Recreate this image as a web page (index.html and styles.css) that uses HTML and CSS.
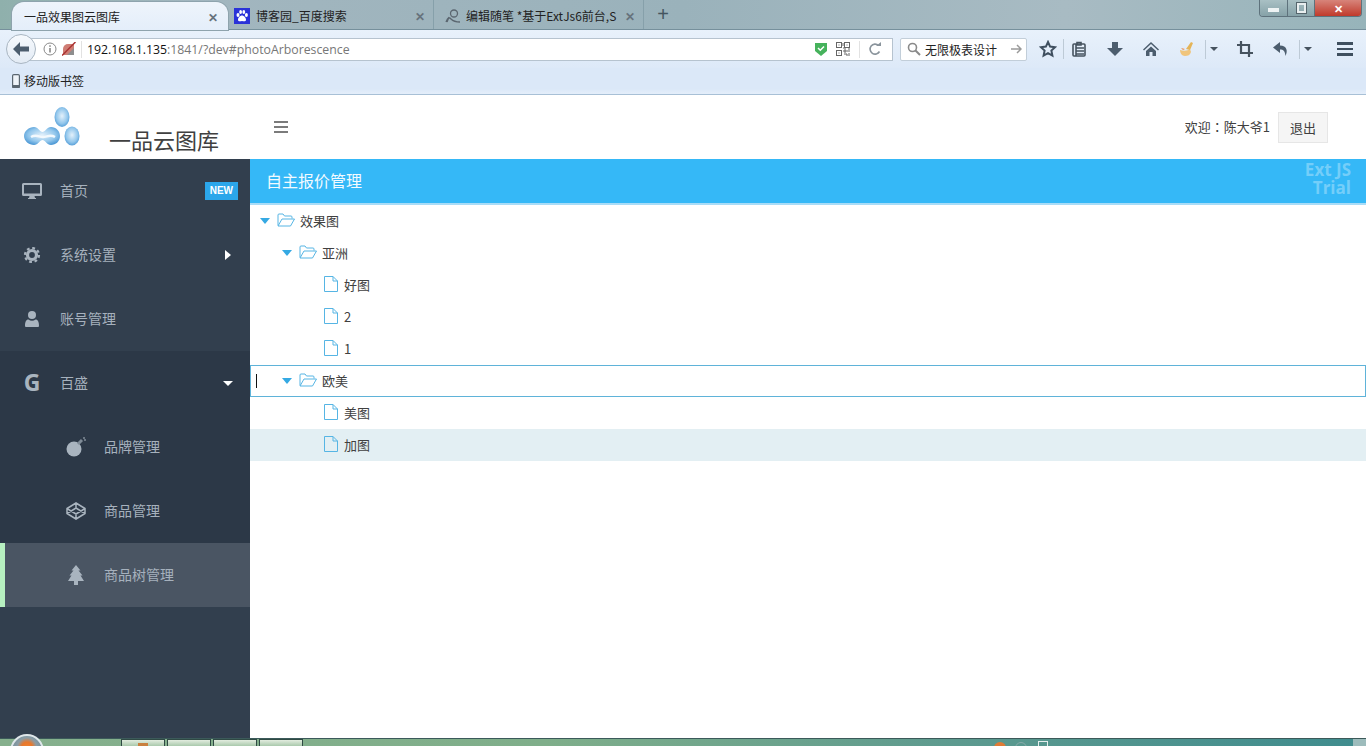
FILE: index.html
```html
<!DOCTYPE html>
<html lang="en">
<head>
    <meta charset="UTF-8">
    <meta name="viewport" content="width=device-width, initial-scale=1.0">
    <title>一品效果图云图库</title>
    <link rel="stylesheet" href="styles.css">
</head>
<body>
    <!-- browser chrome -->
    <div class="tabstrip">
        <div class="tab tab-active">
            <span class="tab-title">一品效果图云图库</span>
            <span class="tab-close">✕</span>
        </div>
        <div class="tab tab-baidu">
            <svg class="favicon" viewBox="0 0 16 16"><rect width="16" height="16" fill="#2a32d8"/><g fill="#fff"><ellipse cx="4" cy="7" rx="1.5" ry="2"/><ellipse cx="6.6" cy="4" rx="1.4" ry="2"/><ellipse cx="9.8" cy="4" rx="1.4" ry="2"/><ellipse cx="12.4" cy="7" rx="1.5" ry="2"/><path d="M8 7.5c-2 0-4 2.4-4 4.2 0 1.6 1.6 1.8 4 1.3 2.4.5 4 .3 4-1.3 0-1.800-2-4.200-4-4.200z"/></g></svg>
            <span class="tab-title">博客园_百度搜索</span>
            <span class="tab-close">✕</span>
        </div>
        <div class="tab tab-cnblogs">
            <svg class="favicon" viewBox="0 0 16 16" fill="none" stroke="#5b6670" stroke-width="1.300"><circle cx="9" cy="5.500" r="3.500"/><path d="M1 14c2-5 3-5 5-3s6 3 9 3M4 9l-2 5"/></svg>
            <span class="tab-title tab-fade">编辑随笔 *基于ExtJs6前台,S</span>
            <span class="tab-close">✕</span>
        </div>
        <div class="tab-new">+</div>
        <div class="winbtns">
            <div class="winbtn win-min"><i></i></div>
            <div class="winbtn win-max"><i></i></div>
            <div class="winbtn win-close">✕</div>
        </div>
    </div>

    <div class="navbar">
        <div class="backbtn">
            <svg width="18" height="16" viewBox="0 0 18 16"><path d="M8 1 1 8l7 7V10.500h9v-5H8z" fill="#4c5d6e"/></svg>
        </div>
        <div class="urlbar">
            <svg class="url-icon" width="14" height="14" viewBox="0 0 14 14"><circle cx="7" cy="7" r="6" fill="none" stroke="#8a8a8a"/><rect x="6.300" y="6" width="1.400" height="4.500" fill="#777"/><rect x="6.300" y="3.300" width="1.400" height="1.500" fill="#777"/></svg>
            <svg class="url-icon" width="14" height="14" viewBox="0 0 14 14"><path d="M1 13V7a5 5 0 0 1 5-5h6v11z" fill="#cf7d74"/><path d="M0 13.500 13.500 0" stroke="#a33" stroke-width="1.500"/><path d="M5 13l7-7v7z" fill="#8e8e8e"/></svg>
            <span class="url-sep"></span>
            <span class="url-text"><b>192.168.1.135</b>:1841/?dev#photoArborescence</span>
            <svg class="url-icon" width="14" height="16" viewBox="0 0 14 16"><path d="M1 2h12v8l-6 5-6-5z" fill="#46b25c"/><path d="M4 7l2.300 2.300L10 5.500" stroke="#fff" stroke-width="1.500" fill="none"/></svg>
            <svg class="url-icon qr" width="14" height="14" viewBox="0 0 14 14" fill="none" stroke="#666"><rect x=".5" y=".5" width="5" height="5"/><rect x="8.500" y=".5" width="5" height="5"/><rect x=".5" y="8.500" width="5" height="5"/><path d="M2.500 3h1M10.500 3h1M2.500 11h1M7 1v3M7 6h3M12 7h2M8 8h2v2H8zM11 9h3M8 12h3v2M13 11v3" /></svg>
            <span class="url-sep sep-right"></span>
            <svg class="url-icon reload" width="14" height="14" viewBox="0 0 14 14" fill="none"><path d="M11.500 9.500A5 5 0 1 1 10.500 3.500" stroke="#8a949c" stroke-width="1.600"/><path d="M8 4h5V0z" fill="#8a949c"/></svg>
        </div>
        <div class="searchbar">
            <svg width="14" height="14" viewBox="0 0 14 14" fill="none" stroke="#8a8a8a" stroke-width="1.600"><circle cx="5.500" cy="5.500" r="4"/><path d="M8.500 8.500 13 13" stroke-width="2"/></svg>
            <span class="search-text">无限极表设计</span>
            <svg width="11" height="10" viewBox="0 0 11 10" fill="none" stroke="#9a9a9a" stroke-width="1.500"><path d="M0 5h9M6 1l4 4-4 4"/></svg>
        </div>
        <div class="tools">
            <div class="tool"><svg width="18" height="18" viewBox="0 0 18 18"><path d="M9 2l2.100 4.600 5 .6-3.700 3.400 1 5L9 13.100 4.600 15.600l1-5L1.900 7.200l5-.6z" fill="none" stroke="#3f4f5f" stroke-width="2"/></svg></div>
            <div class="tool tool-line"><svg width="16" height="16" viewBox="0 0 16 16" fill="none" stroke="#46535f" stroke-width="1.600"><rect x="2" y="3" width="12" height="12" rx="1"/><path d="M6 1.500h4V4H6zM5 7h8M5 10h8M5 13h8M5 3v12"/></svg></div>
            <div class="tool"><svg width="18" height="16" viewBox="0 0 18 16"><path d="M6 1h6v6h5l-8 8-8-8h5z" fill="#4c5d6e"/></svg></div>
            <div class="tool"><svg width="16" height="16" viewBox="0 0 16 16"><path d="M8 1 0 8.500l1 1L8 3l7 6.500 1-1zM3 10l5-4.500L13 10v5H9.500v-4h-3v4H3z" fill="#4c5d6e"/></svg></div>
            <div class="tool"><svg width="16" height="16" viewBox="0 0 16 16"><path d="M1 9c3 1 8 1 10-1l1 3c-1 3-3 4-6 4-3 0-5-3-5-6z" fill="#f0c57c"/><path d="M7 8l5-7 2 1-3 7z" fill="#e4b458"/><path d="M2 7l4 1-2 1z" fill="#ea8a4a"/></svg></div>
            <div class="tool-caret caret-first"><i></i></div>
            <div class="tool tool-crop"><svg width="16" height="16" viewBox="0 0 16 16" fill="none" stroke="#46535f" stroke-width="2.200"><path d="M4 0v12h12M0 4h12v12"/></svg></div>
            <div class="tool"><svg width="16" height="14" viewBox="0 0 16 14"><path d="M7 0 0 5.500 7 11V7.500c3 0 5 1 5.500 6.500C15 9 14 3.500 7 3.500z" fill="#4c5d6e"/></svg></div>
            <div class="tool-caret"><i></i></div>
            <div class="tool tool-menu"><i></i><i></i><i></i></div>
        </div>
    </div>

    <div class="bookmarks">
        <svg width="8" height="14" viewBox="0 0 8 14"><rect x=".6" y=".6" width="6.800" height="12.800" rx="1.200" fill="#eef3f8" stroke="#5a6670" stroke-width="1.200"/><rect x="0" y="11" width="8" height="3" rx="1" fill="#5a6670"/></svg>
        <span>移动版书签</span>
    </div>

    <!-- app -->
    <div class="app-header">
        <div class="logo">
            <svg width="62" height="42" viewBox="0 0 62 42">
                <defs>
                    <radialGradient id="blob" cx="50%" cy="45%" r="58%">
                        <stop offset="0" stop-color="#e4f1fb"/>
                        <stop offset=".65" stop-color="#93c7ec"/>
                        <stop offset="1" stop-color="#4f9ad6"/>
                    </radialGradient>
                </defs>
                <ellipse cx="40" cy="11" rx="7.500" ry="10" fill="url(#blob)"/>
                <ellipse cx="50" cy="30" rx="7.500" ry="9.500" fill="url(#blob)"/>
                <path d="M12 21C16 21 18 26 20.500 26 23 26 25 21 29 21 34 21 38 25 38 30S34 39 29 39C25 39 23 34 20.500 34S16 39 12 39C7 39 2 35 2 30S7 21 12 21z" fill="url(#blob)"/>
                <path d="M9 31c5-3 8 0 12 0s7-3 12 0" stroke="#f3f9fd" stroke-width="2.500" fill="none"/>
            </svg>
        </div>
        <div class="brand">一品云图库</div>
        <div class="hamburger"><i></i><i></i><i></i></div>
        <div class="welcome">欢迎<span class="colon">：</span>陈大爷1</div>
        <button class="logout">退出</button>
    </div>

    <div class="app-body">
        <div class="sidebar">
            <div class="menu-item">
                <svg class="menu-icon" width="20" height="16" viewBox="0 0 20 16"><path d="M0 1.500A1.500 1.500 0 0 1 1.500 0h17A1.500 1.500 0 0 1 20 1.500v10a1.500 1.500 0 0 1-1.500 1.500h-6l.5 2h1v1H6v-1h1l.5-2h-6A1.500 1.500 0 0 1 0 11.500zM2 2v8.500h16V2z" fill="#a9b4bf"/></svg>
                <span>首页</span>
                <em class="badge">NEW</em>
            </div>
            <div class="menu-item">
                <svg class="menu-icon" width="20" height="16" viewBox="0 0 16 16"><circle cx="8" cy="8" r="4.500" fill="none" stroke="#a9b4bf" stroke-width="3.200"/><circle cx="8" cy="8" r="7" fill="none" stroke="#a9b4bf" stroke-width="2.200" stroke-dasharray="2.800 2.700"/></svg>
                <span>系统设置</span>
                <i class="caret-right"></i>
            </div>
            <div class="menu-item">
                <svg class="menu-icon" width="20" height="16" viewBox="0 0 14 16"><circle cx="7" cy="4" r="4" fill="#a9b4bf"/><path d="M1 16a1 1 0 0 1-1-1c0-4 1-6.500 3.500-6.500 1 .8 2.200 1.200 3.500 1.200s2.500-.4 3.500-1.200C13 8.500 14 11 14 15a1 1 0 0 1-1 1z" fill="#a9b4bf"/></svg>
                <span>账号管理</span>
            </div>
            <div class="menu-group">
                <div class="menu-item">
                    <span class="menu-icon g-icon">G</span>
                    <span>百盛</span>
                    <i class="caret-down"></i>
                </div>
                <div class="menu-item sub-item">
                    <svg class="menu-icon" width="20" height="20" viewBox="0 0 20 20"><circle cx="8" cy="12" r="7.500" fill="#a9b4bf"/><path d="M12 7l4-4" stroke="#7f8b97" stroke-width="3"/><path d="M18 0v2M20 3h-2" stroke="#a9b4bf"/></svg>
                    <span>品牌管理</span>
                </div>
                <div class="menu-item sub-item">
                    <svg class="menu-icon" width="20" height="18" viewBox="0 0 20 18" fill="none" stroke="#a9b4bf" stroke-width="1.500"><path d="M10 1l9 5.500v5L10 17l-9-5.500v-5zM10 1v5M1 11.500 10 6l9 5.500M1 6.500 10 12l9-5.500M10 12v5"/></svg>
                    <span>商品管理</span>
                </div>
            </div>
            <div class="menu-item sub-item menu-active">
                <svg class="menu-icon" width="20" height="20" viewBox="0 0 16 20"><path d="M8 0l4.500 5.500h-2l4 5h-2l3.500 5.500H0l3.500-5.500h-2l4-5h-2zM6 16h4v4H6z" fill="#a9b4bf"/></svg>
                <span>商品树管理</span>
            </div>
        </div>

        <div class="panel">
            <div class="panel-head">
                <span>自主报价管理</span>
                <div class="trial">Ext JS<br>Trial</div>
            </div>
            <div class="tree">
                <div class="node lvl0">
                    <i class="node-arrow"></i>
                    <svg class="folder" width="18" height="14" viewBox="0 0 18 14" fill="none" stroke="#56b5e4"><path d="M1 12.500V2a1 1 0 0 1 1-1h4l1.500 2H14a1 1 0 0 1 1 1v1.500"/><path d="M1 13h12.500L17.500 6H5z"/></svg>
                    <span>效果图</span>
                </div>
                <div class="node lvl1">
                    <i class="node-arrow"></i>
                    <svg class="folder" width="18" height="14" viewBox="0 0 18 14" fill="none" stroke="#56b5e4"><path d="M1 12.500V2a1 1 0 0 1 1-1h4l1.500 2H14a1 1 0 0 1 1 1v1.500"/><path d="M1 13h12.500L17.500 6H5z"/></svg>
                    <span>亚洲</span>
                </div>
                <div class="node leaf">
                    <svg class="file" width="14" height="16" viewBox="0 0 14 16" fill="none" stroke="#56b5e4"><path d="M.5.5h8.500l4.500 4.500v10.500H.5zM9 .5V5h4.500"/></svg>
                    <span>好图</span>
                </div>
                <div class="node leaf">
                    <svg class="file" width="14" height="16" viewBox="0 0 14 16" fill="none" stroke="#56b5e4"><path d="M.5.5h8.500l4.500 4.500v10.500H.5zM9 .5V5h4.500"/></svg>
                    <span>2</span>
                </div>
                <div class="node leaf">
                    <svg class="file" width="14" height="16" viewBox="0 0 14 16" fill="none" stroke="#56b5e4"><path d="M.5.5h8.500l4.500 4.500v10.500H.5zM9 .5V5h4.500"/></svg>
                    <span>1</span>
                </div>
                <div class="node lvl1 node-focus">
                    <i class="cursor"></i>
                    <i class="node-arrow"></i>
                    <svg class="folder" width="18" height="14" viewBox="0 0 18 14" fill="none" stroke="#56b5e4"><path d="M1 12.500V2a1 1 0 0 1 1-1h4l1.500 2H14a1 1 0 0 1 1 1v1.500"/><path d="M1 13h12.500L17.500 6H5z"/></svg>
                    <span>欧美</span>
                </div>
                <div class="node leaf">
                    <svg class="file" width="14" height="16" viewBox="0 0 14 16" fill="none" stroke="#56b5e4"><path d="M.5.5h8.500l4.500 4.500v10.500H.5zM9 .5V5h4.500"/></svg>
                    <span>美图</span>
                </div>
                <div class="node leaf node-selected">
                    <svg class="file" width="14" height="16" viewBox="0 0 14 16" fill="none" stroke="#56b5e4"><path d="M.5.5h8.500l4.500 4.500v10.500H.5zM9 .5V5h4.500"/></svg>
                    <span>加图</span>
                </div>
            </div>
        </div>
    </div>

    <!-- windows taskbar, mostly cut off -->
    <div class="taskbar">
        <div class="orb"></div>
        <div class="task task-first"><i></i></div>
        <div class="task"></div>
        <div class="task"></div>
        <div class="task"></div>
        <div class="tray">
            <i class="tray-orange"></i>
            <i class="tray-gray"></i>
            <i class="tray-white"></i>
            <i class="show-desktop"></i>
        </div>
    </div>
</body>
</html>
```

FILE: styles.css
```css
* {
    box-sizing: border-box;
}
html, body {
    height: 100%;
}
body {
    margin: 0;
    display: flex;
    flex-direction: column;
    overflow: hidden;
    background-color: #fff;
    font-family: "Noto Sans CJK SC", "Liberation Sans", sans-serif;
    font-size: 13px;
    color: #404040;
}

/* tabs */
.tabstrip {
    display: flex;
    flex: 0 0 30px;
    padding-left: 12px;
    background: linear-gradient(90deg, #8fb0ac 0, #a2b6bf 14%, #9ab2bb 50%, #a8bbc3 78%, #97b4ba 100%);
    border-bottom: 1px solid #76909c;
}
.tab {
    display: flex;
    align-items: center;
    height: 29px;
    padding-top: 2px;
    font-size: 12px;
    color: #222;
}
.tab-active {
    position: relative;
    width: 216px;
    height: 28px;
    margin: 2px 0 -1px;
    padding: 0 10px 0 12px;
    background: linear-gradient(#eef4fb, #e4eefa);
    border-radius: 12px 12px 0 0;
    box-shadow: 0 0 0 1px #8ea3ad;
}
.tab-baidu {
    width: 204px;
    margin-left: 2px;
    padding-left: 4px;
    padding-right: 8px;
    border-right: 1px solid #86a0aa;
}
.tab-cnblogs {
    width: 210px;
    padding-left: 11px;
    padding-right: 8px;
    border-right: 1px solid #86a0aa;
}
.tab-title {
    flex: 1;
    overflow: hidden;
    white-space: nowrap;
}
.tab-fade {
    margin-right: 5px;
}
.tab-close {
    font-size: 12px;
    font-weight: bold;
    color: #66727c;
}
.favicon {
    flex: none;
    width: 16px;
    height: 16px;
    margin-right: 6px;
}
.tab-cnblogs .favicon {
    margin-right: 5px;
}
.tab-new {
    width: 38px;
    text-align: center;
    font-family: "Liberation Sans", sans-serif;
    font-size: 20px;
    line-height: 29px;
    color: #445560;
}
.winbtns {
    display: flex;
    height: 17px;
    margin-left: auto;
    margin-right: 4px;
    border: 1px solid #5e727c;
    border-top: none;
    border-radius: 0 0 4px 4px;
    overflow: hidden;
}
.winbtn {
    display: flex;
    align-items: center;
    justify-content: center;
    height: 100%;
    background: linear-gradient(#a9c0c4, #86a2a8);
    border-right: 1px solid #5e727c;
}
.win-min {
    width: 28px;
}
.win-min i {
    width: 11px;
    height: 4px;
    margin-top: 4px;
    background-color: #eef3f4;
}
.win-max {
    width: 27px;
}
.win-max i {
    width: 9px;
    height: 10px;
    border: 2px solid #e8eeef;
    outline: 1px solid #55666d;
}
.win-close {
    width: 46px;
    border-right: none;
    background: linear-gradient(#d7847a, #c03a2b);
    color: #fff;
    font-size: 11px;
    font-weight: bold;
}

/* nav bar */
.navbar {
    display: flex;
    align-items: center;
    flex: 0 0 38px;
    padding: 0 0 0 6px;
    background: linear-gradient(#e8f1fb, #dde9f8);
}
.backbtn {
    position: relative;
    z-index: 1;
    display: flex;
    align-items: center;
    justify-content: center;
    width: 30px;
    height: 30px;
    background: linear-gradient(#f6f9fd, #e3ebf5);
    border: 1px solid #a9b6c2;
    border-radius: 50%;
}
.urlbar {
    display: flex;
    align-items: center;
    width: 863px;
    height: 23px;
    margin-left: -6px;
    padding-left: 13px;
    background-color: #fff;
    border: 1px solid #b6c3cf;
    border-width: 1px 1px 1px 0;
}
.url-icon {
    flex: none;
    margin-right: 5px;
}
.url-sep {
    width: 1px;
    height: 17px;
    margin: 0 5px 0 0;
    background-color: #e2e2e2;
}
.url-text {
    flex: 1;
    font-family: "Open Sans", "Liberation Sans", sans-serif;
    font-size: 12.300px;
    color: #777;
    white-space: nowrap;
}
.url-text b {
    font-weight: normal;
    color: #111;
}
.qr {
    margin-left: 3px;
    margin-right: 9px;
}
.sep-right {
    margin-right: 8px;
}
.reload {
    margin-right: 10px;
}
.searchbar {
    display: flex;
    align-items: center;
    width: 127px;
    height: 23px;
    margin-left: 7px;
    padding: 0 4px 0 6px;
    background-color: #fff;
    border: 1px solid #c2ced9;
    border-radius: 2px;
}
.search-text {
    flex: 1;
    margin-left: 4px;
    font-size: 12px;
    color: #222;
}
.tools {
    display: flex;
    align-items: center;
    margin-left: 3px;
}
.tool {
    display: flex;
    align-items: center;
    justify-content: center;
    width: 36px;
    height: 22px;
}
.tool-line {
    position: relative;
    margin-left: -5px;
}
.tool-line::before {
    content: "";
    position: absolute;
    left: 2px;
    top: 1px;
    width: 1px;
    height: 20px;
    background-color: #bdcad6;
}
.tool-caret {
    display: flex;
    align-items: center;
    justify-content: center;
    width: 16px;
    height: 19px;
    border-left: 1px solid #bdcad6;
}
.caret-first {
    margin-right: 6px;
}
.tool-caret i {
    border: 4px solid transparent;
    border-top: 4px solid #46535f;
    border-bottom: none;
}
.tool-menu {
    flex-direction: column;
    gap: 3px;
    margin-left: 12px;
}
.tool-menu i {
    width: 16px;
    height: 2.500px;
    background-color: #3f4f5f;
}

/* bookmarks */
.bookmarks {
    display: flex;
    align-items: center;
    gap: 4px;
    flex: 0 0 27px;
    padding: 0 0 1px 12px;
    background: linear-gradient(#dbe8f8 80%, #e4eefa);
    border-bottom: 1px solid #a8c0d6;
    font-size: 12px;
    color: #222;
}

/* app header */
.app-header {
    display: flex;
    align-items: center;
    flex: 0 0 64px;
    padding-right: 38px;
}
.logo {
    width: 109px;
    height: 46px;
    padding: 2px 0 0 22px;
}
.brand {
    width: 165px;
    height: 64px;
    padding-top: 26px;
    font-size: 22px;
    line-height: 36px;
    color: #404040;
}
.hamburger {
    display: flex;
    flex-direction: column;
    gap: 3px;
    width: 14px;
}
.hamburger i {
    height: 2px;
    background-color: #7b7b7b;
}
.welcome {
    margin-left: auto;
    margin-bottom: 2px;
    color: #404040;
}
.colon {
    font-family: "Noto Sans CJK TC", sans-serif;
}
.logout {
    width: 50px;
    height: 31px;
    margin-top: 1px;
    margin-left: 8px;
    background-color: #f5f5f5;
    border: 1px solid #e6e6e6;
    font-family: inherit;
    font-size: 13px;
    color: #404040;
}

/* sidebar */
.app-body {
    display: flex;
    flex: 1;
    min-height: 0;
}
.sidebar {
    flex: 0 0 250px;
    background-color: #323f4e;
    color: #a6b1bd;
    font-size: 14px;
}
.menu-group {
    background-color: #2c3847;
}
.menu-item {
    display: flex;
    align-items: center;
    height: 64px;
    padding: 0 12px 0 22px;
}
.menu-item span {
    padding-bottom: 2px;
}
.menu-icon {
    flex: none;
    width: 20px;
    margin-right: 18px;
    text-align: center;
}
.sub-item {
    padding-left: 66px;
}
.menu-active {
    padding-left: 61px;
    background-color: #4a5563;
    border-left: 5px solid #b7f0c0;
}
.g-icon {
    font-family: "Open Sans", "Liberation Sans", sans-serif;
    font-size: 23px;
    font-weight: bold;
    line-height: 24px;
    color: #a9b4bf;
}
.badge {
    margin-left: auto;
    padding: 0 5px;
    background-color: #2ba6ea;
    font-family: "Liberation Sans", sans-serif;
    font-size: 10px;
    font-style: normal;
    font-weight: bold;
    line-height: 18px;
    color: #fff;
}
.caret-right {
    margin-left: auto;
    margin-right: 7px;
    border: 5px solid transparent;
    border-left: 6px solid #fff;
    border-right: none;
}
.caret-down {
    margin-left: auto;
    margin-right: 5px;
    border: 5px solid transparent;
    border-top: 5px solid #fff;
    border-bottom: none;
}

/* tree panel */
.panel {
    flex: 1;
    min-width: 0;
}
.panel-head {
    display: flex;
    align-items: center;
    justify-content: space-between;
    height: 46px;
    padding: 0 15px 2px 16px;
    background-color: #35b8f7;
    border-bottom: 2px solid #a9dcf7;
    font-size: 16px;
    color: #f2faff;
}
.trial {
    margin-bottom: 2px;
    font-family: "Open Sans", "Liberation Sans", sans-serif;
    font-size: 17px;
    font-weight: bold;
    line-height: 18px;
    text-align: right;
    color: rgba(255, 255, 255, 0.32);
}
.node {
    position: relative;
    display: flex;
    align-items: center;
    height: 32px;
    color: #404040;
}
.node span {
    padding-bottom: 2px;
}
.lvl0 {
    padding-left: 10px;
}
.lvl1 {
    padding-left: 32px;
}
.leaf {
    padding-left: 74px;
}
.node-arrow {
    margin-right: 7px;
    border: 5.500px solid transparent;
    border-top: 6px solid #35a9e3;
    border-bottom: none;
}
.folder {
    margin-right: 5px;
    margin-top: -3px;
}
.file {
    margin-right: 6px;
    margin-top: -3px;
}
.node-focus {
    outline: 1px solid #5fb3d9;
    outline-offset: -1px;
}
.cursor {
    position: absolute;
    left: 6px;
    top: 9px;
    width: 1px;
    height: 14px;
    background-color: #111;
}
.node-selected {
    background-color: #e3eff3;
}

/* taskbar */
.taskbar {
    position: relative;
    display: flex;
    flex: 0 0 8px;
    gap: 2px;
    min-height: 0;
    padding-left: 121px;
    background: linear-gradient(90deg, #86b08d 0, #7fae8a 40%, #5d9a8f 70%, #3f8c8e 100%);
    border-top: 1px solid #3c5a5a;
}
.orb {
    position: absolute;
    left: 10px;
    top: -5px;
    width: 34px;
    height: 34px;
    border: 2px solid #dfe7ea;
    border-radius: 50%;
    background: radial-gradient(circle at 50% 38%, #f0812e 0, #e8782c 22%, #8a9ca5 40%, #5a7a86 100%);
}
.task {
    display: flex;
    justify-content: center;
    width: 44px;
    background: linear-gradient(#e2ecdf, #a9c9ac);
    border: 1px solid #2f4a44;
    border-bottom: none;
}
.task-first i {
    width: 10px;
    height: 3px;
    margin-top: 3px;
    background-color: #c9803f;
}
.tray {
    display: flex;
    flex: 1;
    align-items: flex-start;
}
.tray i {
    display: block;
    height: 7px;
}
.tray-orange {
    width: 12px;
    margin-left: auto;
    margin-top: 3px;
    background-color: #e07b35;
    border-radius: 6px 6px 0 0;
}
.tray-gray {
    width: 12px;
    margin-left: 9px;
    margin-top: 3px;
    border: 1px solid #8aa;
    border-radius: 6px 6px 0 0;
}
.tray-white {
    width: 10px;
    margin-left: 11px;
    margin-top: 2px;
    border: 1px solid #e6eeee;
}
.show-desktop {
    width: 13px;
    margin-left: 305px;
    background-color: #9dbcbc;
}
```
